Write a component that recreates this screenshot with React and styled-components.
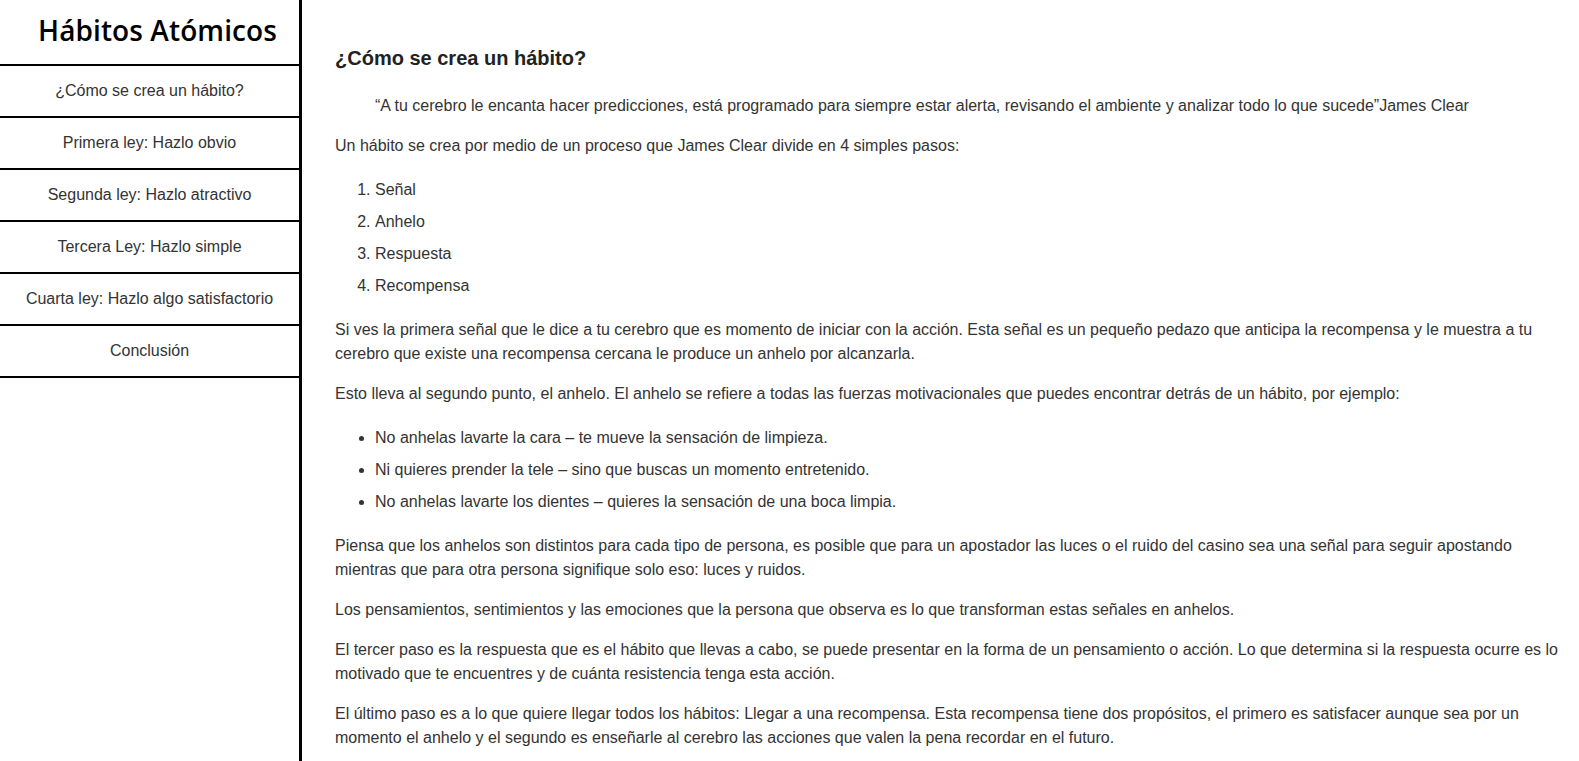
import React from 'react';
import styled, { createGlobalStyle } from 'styled-components';

const NAV = [
  '¿Cómo se crea un hábito?',
  'Primera ley: Hazlo obvio',
  'Segunda ley: Hazlo atractivo',
  'Tercera Ley: Hazlo simple',
  'Cuarta ley: Hazlo algo satisfactorio',
  'Conclusión',
];

const PASOS = ['Señal', 'Anhelo', 'Respuesta', 'Recompensa'];

const EJEMPLOS = [
  'No anhelas lavarte la cara – te mueve la sensación de limpieza.',
  'Ni quieres prender la tele – sino que buscas un momento entretenido.',
  'No anhelas lavarte los dientes – quieres la sensación de una boca limpia.',
];

const App = () => {
  return (
    <>
      <GlobalStyle />
      <Page>
        <Navbar>
          <NavHeader>Hábitos Atómicos</NavHeader>
          <NavList>
            {NAV.map((item, idx) => (
              <NavItem key={idx}>
                <NavLink href="#">{item}</NavLink>
              </NavItem>
            ))}
          </NavList>
        </Navbar>
        <Main>
          <Section>
            <SectionTitle>¿Cómo se crea un hábito?</SectionTitle>
            <Quote>
              “A tu cerebro le encanta hacer predicciones, está programado para siempre estar
              alerta, revisando el ambiente y analizar todo lo que sucede”James Clear
            </Quote>
            <Text>Un hábito se crea por medio de un proceso que James Clear divide en 4 simples pasos:</Text>
            <OrderedList>
              {PASOS.map((paso, idx) => (
                <Item key={idx}>{paso}</Item>
              ))}
            </OrderedList>
            <Text>
              Si ves la primera señal que le dice a tu cerebro que es momento de iniciar con la
              acción. Esta señal es un pequeño pedazo que anticipa la recompensa y le muestra a tu
              cerebro que existe una recompensa cercana le produce un anhelo por alcanzarla.
            </Text>
            <Text>
              Esto lleva al segundo punto, el anhelo. El anhelo se refiere a todas las fuerzas
              motivacionales que puedes encontrar detrás de un hábito, por ejemplo:
            </Text>
            <BulletList>
              {EJEMPLOS.map((ej, idx) => (
                <Item key={idx}>{ej}</Item>
              ))}
            </BulletList>
            <Text>
              Piensa que los anhelos son distintos para cada tipo de persona, es posible que para un
              apostador las luces o el ruido del casino sea una señal para seguir apostando mientras
              que para otra persona signifique solo eso: luces y ruidos.
            </Text>
            <Text>
              Los pensamientos, sentimientos y las emociones que la persona que observa es lo que
              transforman estas señales en anhelos.
            </Text>
            <Text>
              El tercer paso es la respuesta que es el hábito que llevas a cabo, se puede presentar
              en la forma de un pensamiento o acción. Lo que determina si la respuesta ocurre es lo
              motivado que te encuentres y de cuánta resistencia tenga esta acción.
            </Text>
            <Text>
              El último paso es a lo que quiere llegar todos los hábitos: Llegar a una recompensa.
              Esta recompensa tiene dos propósitos, el primero es satisfacer aunque sea por un
              momento el anhelo y el segundo es enseñarle al cerebro las acciones que valen la pena
              recordar en el futuro.
            </Text>
          </Section>
        </Main>
      </Page>
    </>
  );
};

const GlobalStyle = createGlobalStyle`
  * {
    box-sizing: border-box;
  }
  body {
    margin: 0;
    background: #fff;
    color: #333;
    font-family: 'Liberation Sans', Arial, sans-serif;
    font-size: 16px;
  }
`;

const Page = styled.div`
  min-height: 100vh;
`;

const Navbar = styled.nav`
  position: fixed;
  top: 0;
  left: 0;
  width: 302px;
  height: 100vh;
  border-right: 3px solid #000;
  background: #fff;
`;

const NavHeader = styled.header`
  height: 66px;
  display: flex;
  align-items: center;
  justify-content: center;
  padding: 0 0 4px 16px;
  border-bottom: 2px solid #000;
  font-family: 'Open Sans', 'Liberation Sans', sans-serif;
  font-size: 28px;
  font-weight: 600;
  letter-spacing: 0.1px;
  color: #000;
`;

const NavList = styled.ul`
  list-style: none;
  margin: 0;
  padding: 0;
`;

const NavItem = styled.li`
  height: 52px;
  border-bottom: 2px solid #000;
`;

const NavLink = styled.a`
  display: flex;
  align-items: center;
  justify-content: center;
  height: 100%;
  color: #333;
  text-decoration: none;
  font-size: 16px;
`;

const Main = styled.main`
  margin-left: 302px;
  padding: 43px 12px 20px 33px;
`;

const Section = styled.section``;

const SectionTitle = styled.h2`
  margin: 0 0 20px;
  font-size: 20px;
  line-height: 30px;
  font-weight: 700;
  color: #222;
`;

const Quote = styled.blockquote`
  margin: 0 40px 16px;
  line-height: 24px;
  padding-top: 1px;
`;

const Text = styled.p`
  margin: 0 0 16px;
  line-height: 24px;
`;

const OrderedList = styled.ol`
  margin: 0 0 16px;
  padding-left: 40px;
`;

const BulletList = styled.ul`
  margin: 0 0 16px;
  padding-left: 40px;
`;

const Item = styled.li`
  line-height: 24px;
  padding: 4px 0;
`;

export default App;
